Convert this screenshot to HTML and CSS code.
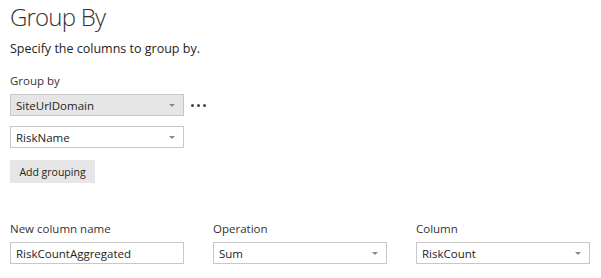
FILE: index.html
```html
<!DOCTYPE html>
<html lang="en">
<head>
  <meta charset="UTF-8" />
  <title>Group By</title>
  <link rel="stylesheet" href="styles.css">
</head>
<body>
  <h1 class="title">Group By</h1>
  <p class="intro">Specify the columns to group by.</p>

  <div class="label">Group by</div>
  <div class="row">
    <div class="select select-active">
      <span>SiteUrlDomain</span>
      <span class="caret"></span>
    </div>
    <span class="more"><i></i><i></i><i></i></span>
  </div>
  <div class="row">
    <div class="select">
      <span>RiskName</span>
      <span class="caret"></span>
    </div>
  </div>
  <button class="add-btn">Add grouping</button>

  <div class="agg">
    <div class="field">
      <div class="label">New column name</div>
      <div class="select text-input">RiskCountAggregated</div>
    </div>
    <div class="field">
      <div class="label">Operation</div>
      <div class="select">
        <span>Sum</span>
        <span class="caret"></span>
      </div>
    </div>
    <div class="field">
      <div class="label">Column</div>
      <div class="select">
        <span>RiskCount</span>
        <span class="caret"></span>
      </div>
    </div>
  </div>
</body>
</html>
```

FILE: styles.css
```css
body {
  margin: 0;
  padding: 2px 10px 0;
  background: #ffffff;
  color: #252423;
  font-family: 'Open Sans', 'Noto Sans', sans-serif;
}

.title {
  margin: 0;
  font-size: 24px;
  font-weight: 300;
  letter-spacing: -0.8px;
  line-height: 30px;
  color: #333333;
}

.intro {
  margin: 8px 0 0;
  font-size: 12.5px;
  line-height: 18px;
}

.label {
  margin-top: 14px;
  font-size: 11.5px;
  line-height: 17px;
  color: #333333;
}

.row {
  display: flex;
  align-items: center;
  gap: 7px;
  margin-top: 5px;
}

.row + .row {
  margin-top: 10px;
}

.select {
  box-sizing: border-box;
  width: 174px;
  height: 22px;
  padding: 0 8px 0 5px;
  border: 1px solid #c8c8c8;
  background: #ffffff;
  display: flex;
  align-items: center;
  justify-content: space-between;
  font-size: 11.5px;
  color: #252423;
}

.select-active {
  background: #e6e6e6;
}

.caret {
  width: 0;
  height: 0;
  border-left: 3px solid transparent;
  border-right: 3px solid transparent;
  border-top: 3px solid #888888;
}

.more {
  display: flex;
  gap: 3px;
}

.more i {
  width: 3px;
  height: 3px;
  border-radius: 50%;
  background: #444444;
}

.add-btn {
  display: block;
  margin-top: 12px;
  height: 23px;
  width: 85px;
  padding: 0;
  border: none;
  background: #e6e6e6;
  font-family: inherit;
  font-size: 10.5px;
  color: #252423;
}

.agg {
  display: grid;
  grid-template-columns: repeat(3, 174px);
  column-gap: 29px;
  margin-top: 37px;
}

.agg .label {
  margin-top: 0;
}

.agg .select {
  margin-top: 5px;
}
```
